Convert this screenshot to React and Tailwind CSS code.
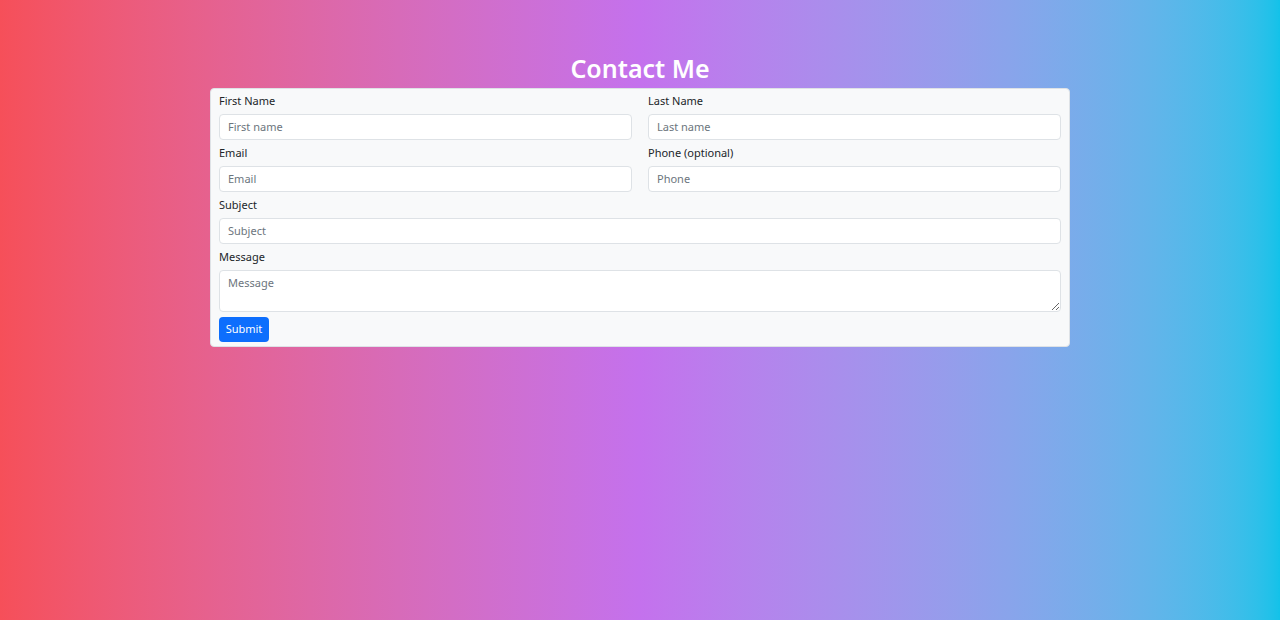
import React from "react";

function Field({ label, placeholder, className = "" }) {
  return (
    <div className={className}>
      <label className="block text-[11px] leading-[18px] mb-1 text-[#212529]">{label}</label>
      <input
        type="text"
        placeholder={placeholder}
        className="block w-full h-[26px] px-2 pb-[1px] text-[11px] bg-white border border-[#dee2e6] rounded-[4px] text-[#212529] placeholder:text-[#6c757d] outline-none"
      />
    </div>
  );
}

export default function App() {
  return (
    <div
      className="min-h-screen bg-gradient-to-r from-[#f64f59] via-[#c471ed] to-[#12c2e9] pt-[52px]"
      style={{ fontFamily: '"Noto Sans", "Open Sans", sans-serif' }}
    >
      <h1 className="text-center text-white font-semibold text-[25px] leading-[32px]">Contact Me</h1>

      <form
        className="w-[860px] mx-auto mt-[4px] bg-[#f8f9fa] border border-[#dee2e6] rounded-[4px] px-2 pt-[3px] pb-[4px]"
        onSubmit={(e) => e.preventDefault()}
      >
        <div className="grid grid-cols-2 gap-x-4 gap-y-[4px]">
          <Field label="First Name" placeholder="First name" />
          <Field label="Last Name" placeholder="Last name" />
          <Field label="Email" placeholder="Email" />
          <Field label="Phone (optional)" placeholder="Phone" />
          <Field label="Subject" placeholder="Subject" className="col-span-2" />
          <div className="col-span-2">
            <label className="block text-[11px] leading-[18px] mb-1 text-[#212529]">Message</label>
            <textarea
              placeholder="Message"
              className="block w-full h-[42px] px-2 py-[4px] text-[11px] bg-white border border-[#dee2e6] rounded-[4px] text-[#212529] placeholder:text-[#6c757d] outline-none resize-y"
            />
          </div>
        </div>
        <button
          type="submit"
          className="mt-[5px] h-[25px] w-[50px] rounded-[4px] bg-[#0d6efd] text-white text-[11px]"
        >
          Submit
        </button>
      </form>
    </div>
  );
}
